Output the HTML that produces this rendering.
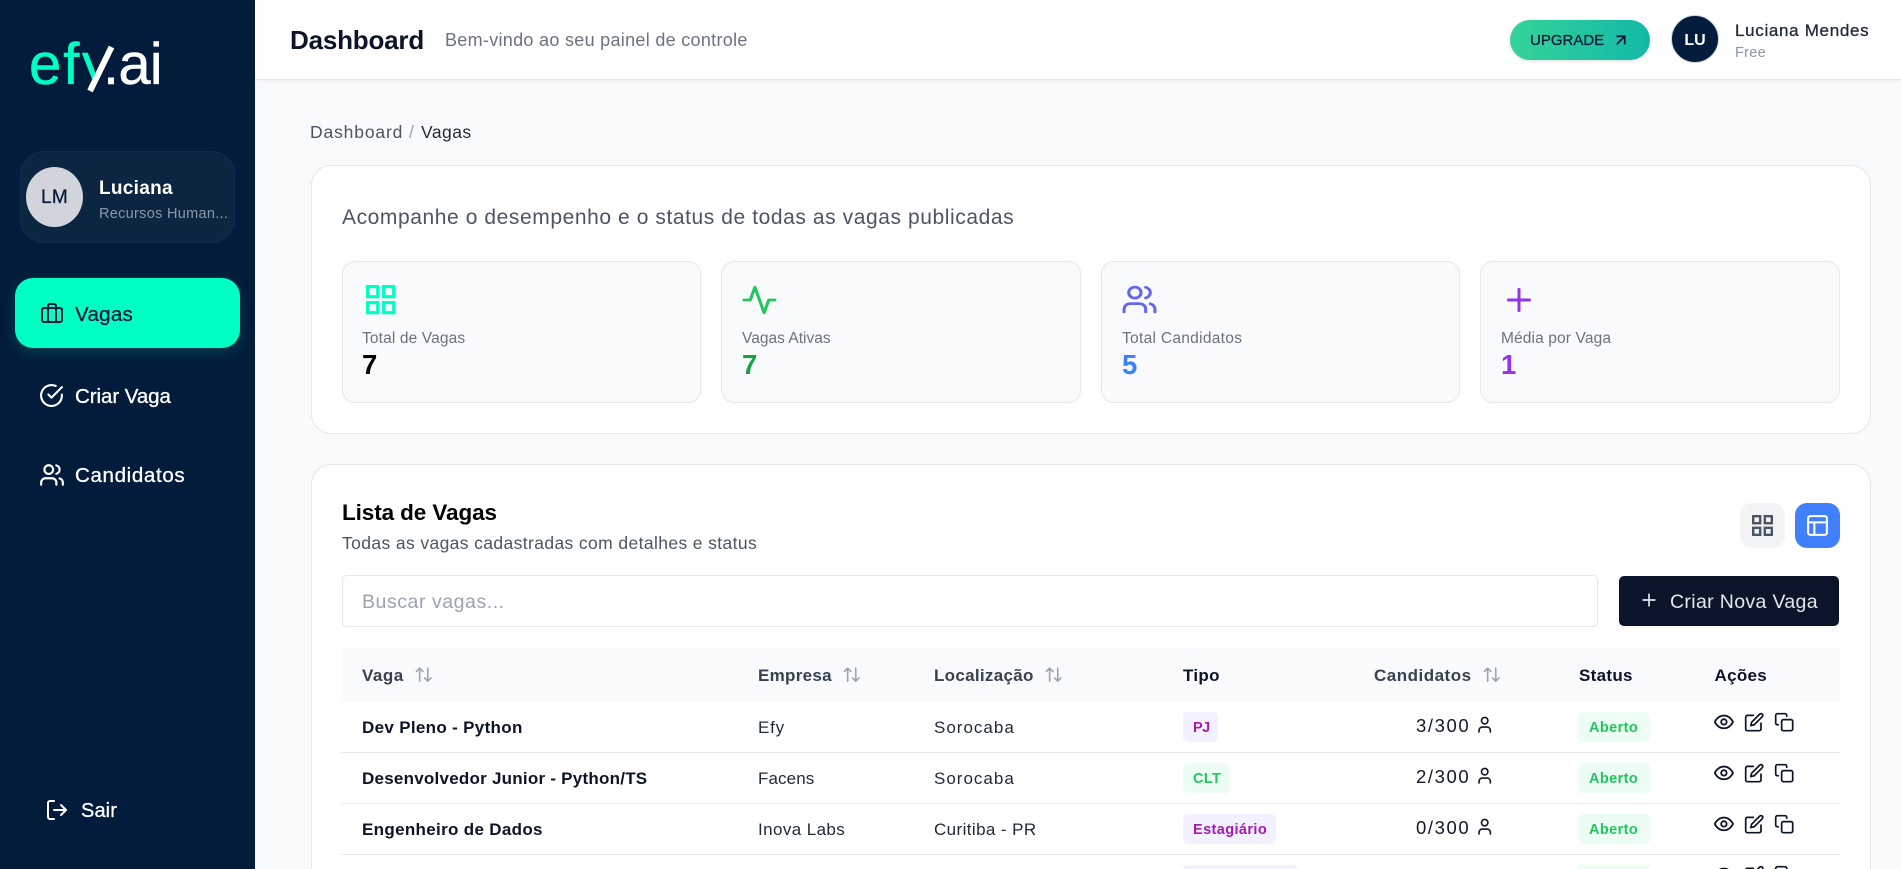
<!DOCTYPE html>
<html lang="pt-BR">
<head>
<meta charset="utf-8">
<title>Dashboard - Vagas</title>
<style>
*{box-sizing:border-box;margin:0;padding:0}
html,body{width:1901px;height:869px;overflow:hidden;background:#f9fafb;font-family:"Liberation Sans",sans-serif}
#app{position:relative;width:1901px;height:869px;overflow:hidden;background:#f9fafb}
.a{position:absolute}
.t{position:absolute;line-height:1;white-space:nowrap;letter-spacing:.3px}
.b{font-weight:700}
.m{-webkit-text-stroke:.3px currentColor}
svg{position:absolute;fill:none;stroke:currentColor;stroke-width:2;stroke-linecap:round;stroke-linejoin:round}
#side{left:0;top:0;width:255px;height:869px;background:#031c3c}
#head{left:255px;top:0;width:1646px;height:80px;background:#fff;border-bottom:1px solid #e5e7eb;box-shadow:0 1px 3px rgba(0,0,0,.05)}
.card{background:#fff;border:1px solid #e5e7eb;border-radius:20px;left:311px;width:1560px}
.stat{background:#f9fafb;border:1px solid #e5e7eb;border-radius:13px;top:261px;height:142px}
.rule{left:341px;width:1499px;height:1px;background:#e5e7eb}
.tag{height:30px;border-radius:5px}
.p{background:#f3f0ff}.g{background:#ecfdf4}
.lb{font-size:15.5px;color:#6b7280;top:331px}
.num{font-size:27.5px;font-weight:700;top:351px}
.th{font-size:17px;top:667px;font-weight:700}
.nm{font-size:17px;font-weight:700;color:#0b1428;letter-spacing:.32px}
.c{font-size:17px;color:#1f2937;letter-spacing:.3px}
.tt{font-size:14.5px;font-weight:700;letter-spacing:.4px}
.pc{color:#a21caf}.gc{color:#22c55e}
.cnt{font-size:18.5px;color:#111827;left:1416px;letter-spacing:1.6px}
.ic{color:#0b1428}
</style>
</head>
<body>
<div id="app">
<div id="side" class="a"></div>

<!-- logo -->
<div class="t" style="left:29px;top:36px;font-size:58px;color:#00ffc3;letter-spacing:2px;-webkit-text-stroke:.6px #00ffc3">ef</div>
<div class="t" style="left:82px;top:36px;font-size:58px;color:#00ffc3;-webkit-text-stroke:.6px #00ffc3;clip-path:polygon(0 0,22px 0,12px 49px,0 49px)">y</div>
<svg style="left:0;top:0;color:#fff" width="160" height="100" viewBox="0 0 160 100"><path d="M90 91 111.500 47" stroke-width="6" stroke-linecap="butt"/></svg>
<div class="t" style="left:103px;top:36px;font-size:58px;color:#fff;letter-spacing:-.8px;-webkit-text-stroke:.4px #fff">.ai</div>

<!-- profile -->
<div class="a" style="left:20px;top:151px;width:215px;height:92px;background:#0c2540;border:1px solid #0f2d50;border-radius:24px"></div>
<div class="a" style="left:26px;top:167px;width:57px;height:60px;border-radius:50%;background:#d1d5db"></div>
<div class="t m" style="left:26px;width:57px;text-align:center;top:188px;font-size:19px;color:#0a1a3a">LM</div>
<div class="t b" style="left:99px;top:179px;font-size:19px;color:#fff">Luciana</div>
<div class="t" style="left:99px;top:207px;font-size:14.5px;color:#8b98a9">Recursos Human...</div>

<!-- nav -->
<div class="a" style="left:15px;top:278px;width:225px;height:70px;background:#00ffc3;border-radius:18px;box-shadow:0 4px 14px rgba(0,255,195,.16)"></div>
<svg style="left:40px;top:301px;color:#0a1a3a" width="24" height="24" viewBox="0 0 24 24"><rect x="2" y="7" width="20" height="14" rx="2"/><path d="M16 21V5a2 2 0 0 0-2-2h-4a2 2 0 0 0-2 2v16"/></svg>
<div class="t m" style="left:75px;top:305px;font-size:20.5px;color:#0a1a3a">Vagas</div>
<svg style="left:39px;top:383px;color:#fff" width="25" height="25" viewBox="0 0 24 24"><path d="M22 11.08V12a10 10 0 1 1-5.93-9.14"/><polyline points="22 4 12 14.01 9 11.01"/></svg>
<div class="t m" style="left:75px;top:387px;font-size:20.5px;color:#fff;letter-spacing:-.06px">Criar Vaga</div>
<svg style="left:39px;top:462px;color:#fff" width="26" height="26" viewBox="0 0 24 24"><path d="M16 21v-2a4 4 0 0 0-4-4H6a4 4 0 0 0-4 4v2"/><circle cx="9" cy="7" r="4"/><path d="M22 21v-2a4 4 0 0 0-3-3.87"/><path d="M16 3.13a4 4 0 0 1 0 7.75"/></svg>
<div class="t m" style="left:75px;top:466px;font-size:20.5px;color:#fff;letter-spacing:.66px">Candidatos</div>
<svg style="left:45px;top:798px;color:#fff" width="24" height="24" viewBox="0 0 24 24"><path d="M9 21H5a2 2 0 0 1-2-2V5a2 2 0 0 1 2-2h4"/><polyline points="16 17 21 12 16 7"/><line x1="21" y1="12" x2="9" y2="12"/></svg>
<div class="t m" style="left:81px;top:801px;font-size:20px;color:#fff;letter-spacing:.1px">Sair</div>

<!-- header -->
<div id="head" class="a"></div>
<div class="t b" style="left:290px;top:27px;font-size:26px;color:#0b1428;letter-spacing:-.2px">Dashboard</div>
<div class="t" style="left:445px;top:31px;font-size:18px;color:#6b7280">Bem-vindo ao seu painel de controle</div>
<div class="a" style="left:1510px;top:20px;width:140px;height:40px;border-radius:20px;background:linear-gradient(90deg,#34d399,#14b8a6);box-shadow:0 1px 3px rgba(0,0,0,.15)"></div>
<div class="t m" style="left:1530px;top:33px;font-size:15px;color:#0a1a3a;letter-spacing:0">UPGRADE</div>
<svg style="left:1612px;top:31px;color:#0a1a3a" width="18" height="18" viewBox="0 0 24 24"><path d="M7 7h10v10M7 17 17 7" stroke-width="2.4"/></svg>
<div class="a" style="left:1671px;top:15px;width:48px;height:48px;border-radius:50%;background:#061c3d;border:1px solid #d1d5db"></div>
<div class="t b" style="left:1671px;width:48px;text-align:center;top:33px;font-size:16px;color:#fff;letter-spacing:0">LU</div>
<div class="t m" style="left:1735px;top:22px;font-size:17px;color:#1f2937;letter-spacing:.68px">Luciana Mendes</div>
<div class="t" style="left:1735px;top:46px;font-size:14.5px;color:#8a93a3">Free</div>

<!-- breadcrumb -->
<div class="t" style="left:310px;top:124px;font-size:17.5px;color:#4b5563;letter-spacing:.85px">Dashboard</div>
<div class="t" style="left:409px;top:124px;font-size:17.5px;color:#9ca3af">/</div>
<div class="t" style="left:421px;top:124px;font-size:17.5px;color:#1f2937;letter-spacing:.45px">Vagas</div>

<!-- card 1 -->
<div class="a card" style="top:165px;height:269px"></div>
<div class="t" style="left:342px;top:207px;font-size:21px;color:#4b5563;letter-spacing:.58px">Acompanhe o desempenho e o status de todas as vagas publicadas</div>

<div class="a stat" style="left:342px;width:359px"></div>
<div class="a stat" style="left:721px;width:360px"></div>
<div class="a stat" style="left:1101px;width:359px"></div>
<div class="a stat" style="left:1480px;width:360px"></div>

<svg style="left:366px;top:285px;color:#00ffc3;stroke-width:3.2;stroke-linecap:butt;stroke-linejoin:miter" width="30" height="30" viewBox="0 0 30 30"><rect x="1.6" y="1.6" width="10.1" height="10.1"/><rect x="17.6" y="1.6" width="10.1" height="10.1"/><rect x="1.6" y="17.6" width="10.1" height="10.1"/><rect x="17.6" y="17.6" width="10.1" height="10.1"/></svg>
<svg style="left:741px;top:282.5px;color:#22c55e" width="37" height="34" viewBox="0 0 24 24" preserveAspectRatio="none"><polyline points="22 12 18 12 15 21 9 3 6 12 2 12"/></svg>
<svg style="left:1121px;top:283px;color:#6366f1" width="37" height="33" viewBox="0 0 24 24" preserveAspectRatio="none"><path d="M16 21v-2a4 4 0 0 0-4-4H6a4 4 0 0 0-4 4v2"/><circle cx="9" cy="7" r="4"/><path d="M22 21v-2a4 4 0 0 0-3-3.87"/><path d="M16 3.13a4 4 0 0 1 0 7.75"/></svg>
<svg style="left:1500.5px;top:281.5px;color:#9333ea" width="36" height="36" viewBox="0 0 24 24"><path d="M5 12h14M12 5v14"/></svg>

<div class="t lb" style="left:362px;letter-spacing:.13px">Total de Vagas</div>
<div class="t lb" style="left:742px;letter-spacing:.02px">Vagas Ativas</div>
<div class="t lb" style="left:1122px">Total Candidatos</div>
<div class="t lb" style="left:1501px;letter-spacing:.13px">Média por Vaga</div>
<div class="t num" style="left:362px;color:#000">7</div>
<div class="t num" style="left:742px;color:#16a34a">7</div>
<div class="t num" style="left:1122px;color:#3b82f6">5</div>
<div class="t num" style="left:1501px;color:#9333ea">1</div>

<!-- card 2 -->
<div class="a card" style="top:464px;height:430px"></div>
<div class="t b" style="left:342px;top:502px;font-size:22.5px;color:#000;letter-spacing:-.1px">Lista de Vagas</div>
<div class="t" style="left:342px;top:535px;font-size:17.5px;color:#4b5563;letter-spacing:.38px">Todas as vagas cadastradas com detalhes e status</div>

<div class="a" style="left:1740px;top:503px;width:45px;height:45px;border-radius:12px;background:#f3f4f6"></div>
<svg style="left:1752px;top:515px;color:#4b5563;stroke-width:2.4;stroke-linecap:butt;stroke-linejoin:miter" width="21" height="21" viewBox="0 0 21 21"><rect x="1.2" y="1.2" width="7" height="7"/><rect x="12.8" y="1.2" width="7" height="7"/><rect x="1.2" y="12.8" width="7" height="7"/><rect x="12.8" y="12.8" width="7" height="7"/></svg>
<div class="a" style="left:1795px;top:503px;width:45px;height:45px;border-radius:12px;background:#4080fb"></div>
<svg style="left:1805px;top:513px;color:#fff" width="25" height="25" viewBox="0 0 24 24"><rect x="3" y="3" width="18" height="18" rx="2"/><path d="M3 9h18M9 21V9"/></svg>

<div class="a" style="left:342px;top:575px;width:1256px;height:52px;background:#fff;border:1px solid #e5e7eb;border-radius:5px"></div>
<div class="t" style="left:362px;top:593px;font-size:19.5px;color:#9ca3af;letter-spacing:.55px">Buscar vagas...</div>
<div class="a" style="left:1619px;top:576px;width:220px;height:50px;background:#0b1428;border-radius:5px"></div>
<svg style="left:1639px;top:590px;color:#e5e7eb" width="20" height="20" viewBox="0 0 24 24"><path d="M5 12h14M12 5v14"/></svg>
<div class="t" style="left:1670px;top:593px;font-size:19.5px;color:#e5e7eb;letter-spacing:.35px">Criar Nova Vaga</div>

<!-- table head -->
<div class="a" style="left:341px;top:647px;width:1499px;height:55px;background:#f9fafb"></div>
<div class="t th" style="left:362px;color:#374151;letter-spacing:.5px">Vaga</div>
<div class="t th" style="left:758px;color:#374151">Empresa</div>
<div class="t th" style="left:934px;color:#374151">Localização</div>
<div class="t th" style="left:1183px;color:#0b1428">Tipo</div>
<div class="t th" style="left:1374px;color:#374151;letter-spacing:.5px">Candidatos</div>
<div class="t th" style="left:1579px;color:#0b1428">Status</div>
<div class="t th" style="left:1714.5px;color:#0b1428">Ações</div>
<svg style="left:414px;top:665px;color:#9ca3af" width="19.4" height="19.4" viewBox="0 0 24 24"><path d="m21 16-4 4-4-4M17 20V4M3 8l4-4 4 4M7 4v16"/></svg>
<svg style="left:842px;top:665px;color:#9ca3af" width="19.4" height="19.4" viewBox="0 0 24 24"><path d="m21 16-4 4-4-4M17 20V4M3 8l4-4 4 4M7 4v16"/></svg>
<svg style="left:1044px;top:665px;color:#9ca3af" width="19.4" height="19.4" viewBox="0 0 24 24"><path d="m21 16-4 4-4-4M17 20V4M3 8l4-4 4 4M7 4v16"/></svg>
<svg style="left:1482px;top:665px;color:#9ca3af" width="19.4" height="19.4" viewBox="0 0 24 24"><path d="m21 16-4 4-4-4M17 20V4M3 8l4-4 4 4M7 4v16"/></svg>

<div class="a rule" style="top:752px"></div>
<div class="a rule" style="top:803px"></div>
<div class="a rule" style="top:854px"></div>

<!-- row 1 -->
<div class="t nm" style="left:362px;top:719px">Dev Pleno - Python</div>
<div class="t c" style="left:758px;top:719px;letter-spacing:.8px">Efy</div>
<div class="t c" style="left:934px;top:719px;letter-spacing:1px">Sorocaba</div>
<div class="a tag p" style="left:1183px;top:712px;width:35px"></div>
<div class="t tt pc" style="left:1193px;top:721px;letter-spacing:-.5px">PJ</div>
<div class="t cnt" style="top:717px">3/300</div>
<svg style="left:1475px;top:715px;color:#111827" width="19.4" height="19.4" viewBox="0 0 24 24"><path d="M19 21v-2a4 4 0 0 0-4-4H9a4 4 0 0 0-4 4v2"/><circle cx="12" cy="7" r="4"/></svg>
<div class="a tag g" style="left:1578px;top:712px;width:72px"></div>
<div class="t tt gc" style="left:1589px;top:721px">Aberto</div>
<svg class="ic" style="left:1713px;top:711px" width="21.8" height="21.8" viewBox="0 0 24 24"><path d="M2 12s3-7 10-7 10 7 10 7-3 7-10 7-10-7-10-7Z"/><circle cx="12" cy="12" r="3"/></svg>
<svg class="ic" style="left:1743.5px;top:711.5px" width="20.4" height="20.4" viewBox="0 0 24 24"><path d="M11 4H4a2 2 0 0 0-2 2v14a2 2 0 0 0 2 2h14a2 2 0 0 0 2-2v-7"/><path d="M18.500 2.500a2.120 2.120 0 0 1 3 3L12 15l-4 1 1-4 9.500-9.500z"/></svg>
<svg class="ic" style="left:1773.500px;top:711.5px" width="20.4" height="20.4" viewBox="0 0 24 24"><rect x="9" y="9" width="13" height="13" rx="2"/><path d="M5 15H4a2 2 0 0 1-2-2V4a2 2 0 0 1 2-2h9a2 2 0 0 1 2 2v1"/></svg>

<!-- row 2 -->
<div class="t nm" style="left:362px;top:770px;letter-spacing:.24px">Desenvolvedor Junior - Python/TS</div>
<div class="t c" style="left:758px;top:770px;letter-spacing:.1px">Facens</div>
<div class="t c" style="left:934px;top:770px;letter-spacing:1px">Sorocaba</div>
<div class="a tag g" style="left:1183px;top:763px;width:47px"></div>
<div class="t tt gc" style="left:1193px;top:772px">CLT</div>
<div class="t cnt" style="top:768px">2/300</div>
<svg style="left:1475px;top:766px;color:#111827" width="19.4" height="19.4" viewBox="0 0 24 24"><path d="M19 21v-2a4 4 0 0 0-4-4H9a4 4 0 0 0-4 4v2"/><circle cx="12" cy="7" r="4"/></svg>
<div class="a tag g" style="left:1578px;top:763px;width:72px"></div>
<div class="t tt gc" style="left:1589px;top:772px">Aberto</div>
<svg class="ic" style="left:1713px;top:762px" width="21.8" height="21.8" viewBox="0 0 24 24"><path d="M2 12s3-7 10-7 10 7 10 7-3 7-10 7-10-7-10-7Z"/><circle cx="12" cy="12" r="3"/></svg>
<svg class="ic" style="left:1743.5px;top:762.5px" width="20.4" height="20.4" viewBox="0 0 24 24"><path d="M11 4H4a2 2 0 0 0-2 2v14a2 2 0 0 0 2 2h14a2 2 0 0 0 2-2v-7"/><path d="M18.500 2.500a2.120 2.120 0 0 1 3 3L12 15l-4 1 1-4 9.500-9.500z"/></svg>
<svg class="ic" style="left:1773.500px;top:762.5px" width="20.4" height="20.4" viewBox="0 0 24 24"><rect x="9" y="9" width="13" height="13" rx="2"/><path d="M5 15H4a2 2 0 0 1-2-2V4a2 2 0 0 1 2-2h9a2 2 0 0 1 2 2v1"/></svg>

<!-- row 3 -->
<div class="t nm" style="left:362px;top:821px">Engenheiro de Dados</div>
<div class="t c" style="left:758px;top:821px;letter-spacing:.4px">Inova Labs</div>
<div class="t c" style="left:934px;top:821px;letter-spacing:.4px">Curitiba - PR</div>
<div class="a tag p" style="left:1183px;top:814px;width:93px"></div>
<div class="t tt pc" style="left:1193px;top:823px">Estagiário</div>
<div class="t cnt" style="top:819px">0/300</div>
<svg style="left:1475px;top:817px;color:#111827" width="19.4" height="19.4" viewBox="0 0 24 24"><path d="M19 21v-2a4 4 0 0 0-4-4H9a4 4 0 0 0-4 4v2"/><circle cx="12" cy="7" r="4"/></svg>
<div class="a tag g" style="left:1578px;top:814px;width:72px"></div>
<div class="t tt gc" style="left:1589px;top:823px">Aberto</div>
<svg class="ic" style="left:1713px;top:813px" width="21.8" height="21.8" viewBox="0 0 24 24"><path d="M2 12s3-7 10-7 10 7 10 7-3 7-10 7-10-7-10-7Z"/><circle cx="12" cy="12" r="3"/></svg>
<svg class="ic" style="left:1743.5px;top:813.5px" width="20.4" height="20.4" viewBox="0 0 24 24"><path d="M11 4H4a2 2 0 0 0-2 2v14a2 2 0 0 0 2 2h14a2 2 0 0 0 2-2v-7"/><path d="M18.500 2.500a2.120 2.120 0 0 1 3 3L12 15l-4 1 1-4 9.500-9.500z"/></svg>
<svg class="ic" style="left:1773.500px;top:813.5px" width="20.4" height="20.4" viewBox="0 0 24 24"><rect x="9" y="9" width="13" height="13" rx="2"/><path d="M5 15H4a2 2 0 0 1-2-2V4a2 2 0 0 1 2-2h9a2 2 0 0 1 2 2v1"/></svg>

<!-- row 4 (cut off) -->
<div class="a tag p" style="left:1183px;top:865px;width:115px"></div>
<div class="a tag g" style="left:1578px;top:865px;width:72px"></div>
<svg class="ic" style="left:1713px;top:864px" width="21.8" height="21.8" viewBox="0 0 24 24"><path d="M2 12s3-7 10-7 10 7 10 7-3 7-10 7-10-7-10-7Z"/><circle cx="12" cy="12" r="3"/></svg>
<svg class="ic" style="left:1743.5px;top:864.5px" width="20.4" height="20.4" viewBox="0 0 24 24"><path d="M11 4H4a2 2 0 0 0-2 2v14a2 2 0 0 0 2 2h14a2 2 0 0 0 2-2v-7"/><path d="M18.500 2.500a2.120 2.120 0 0 1 3 3L12 15l-4 1 1-4 9.500-9.500z"/></svg>
<svg class="ic" style="left:1773.500px;top:864.5px" width="20.4" height="20.4" viewBox="0 0 24 24"><rect x="9" y="9" width="13" height="13" rx="2"/><path d="M5 15H4a2 2 0 0 1-2-2V4a2 2 0 0 1 2-2h9a2 2 0 0 1 2 2v1"/></svg>
</div>
</body>
</html>
